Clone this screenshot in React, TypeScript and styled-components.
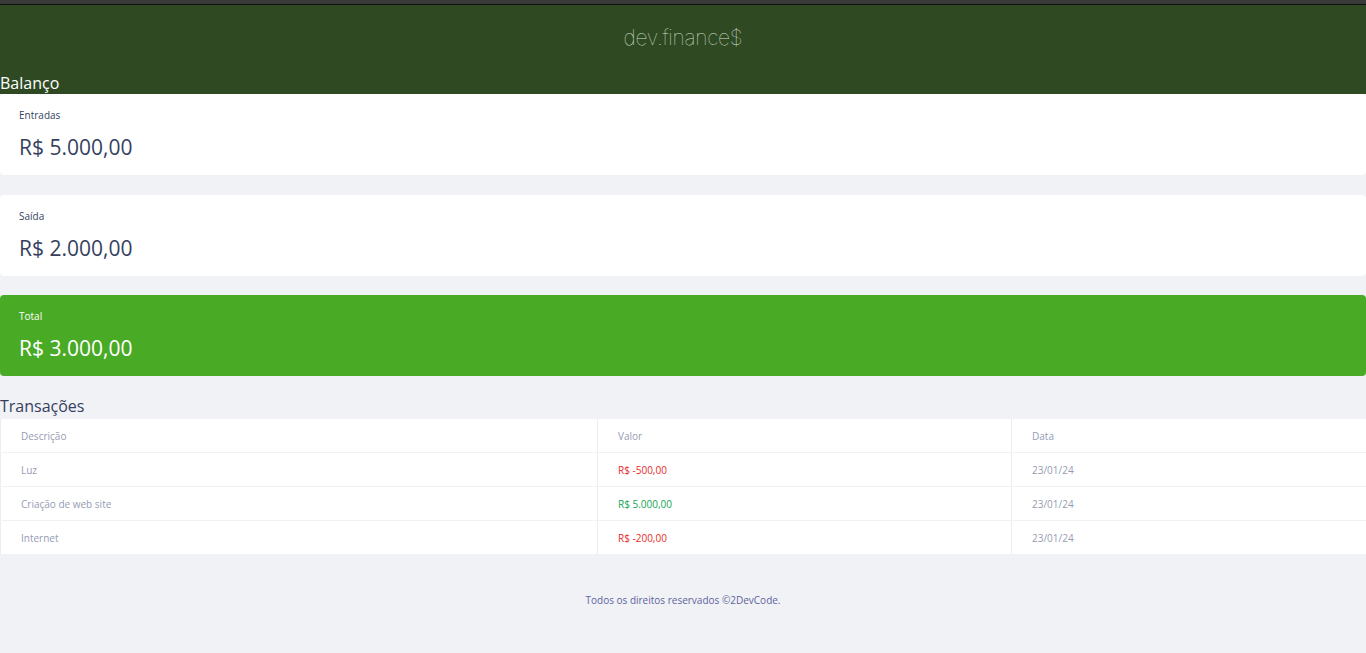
import React from "react";
import styled, { createGlobalStyle } from "styled-components";

const Global = createGlobalStyle`
  html, body { margin: 0; padding: 0; }
  body {
    background: #f0f2f5;
    font-family: "Open Sans", "Noto Sans", sans-serif;
    color: #363f5f;
  }
  * { box-sizing: border-box; }
`;

const TopBar = styled.div`
  height: 5px;
  background: #3a3a3a;
  border-bottom: 1px solid #111;
`;

const Header = styled.header`
  background: #2f4a23;
  height: 89px;
  padding-top: 19px;
  display: flex;
  flex-direction: column;
`;

const Logo = styled.h1`
  margin: 0;
  text-align: center;
  font-family: "Inter", "Open Sans", sans-serif;
  font-weight: 100;
  font-size: 21px;
  line-height: 28px;
  color: #d3dfcd;
  letter-spacing: -0.3px;
`;

const SectionTitle = styled.h2<{ $light?: boolean }>`
  margin: 0;
  font-weight: 400;
  font-size: 16px;
  line-height: 20px;
  color: ${(p) => (p.$light ? "#ffffff" : "#363f5f")};
`;

const HeaderTitle = styled(SectionTitle)`
  margin-top: 21px;
`;

const Main = styled.main`
  display: flex;
  flex-direction: column;
`;

const Cards = styled.section`
  display: flex;
  flex-direction: column;
  gap: 19.5px;
`;

const Card = styled.div<{ $total?: boolean }>`
  height: 81px;
  border-radius: 4px;
  padding: 14px 19px 0;
  background: ${(p) => (p.$total ? "#49aa26" : "#ffffff")};
  color: ${(p) => (p.$total ? "#ffffff" : "#363f5f")};
`;

const CardLabel = styled.h3`
  margin: 0;
  font-size: 10px;
  line-height: 14px;
  font-weight: 400;
`;

const CardValue = styled.p`
  margin: 11px 0 0;
  font-size: 21px;
  line-height: 28px;
  font-weight: 400;
`;

const TransTitle = styled(SectionTitle)`
  margin-top: 20px;
`;

const Table = styled.table`
  width: 100%;
  margin-top: 2px;
  border-collapse: separate;
  border-spacing: 0 1px;
  font-size: 10px;
  color: #969cb3;
`;

const Th = styled.th<{ $w: number }>`
  width: ${(p) => p.$w}px;
  height: 33px;
  background: #fff;
  text-align: left;
  font-weight: 400;
  padding: 0 20px;
  border-left: 1px solid #ebedf0;
`;

const Td = styled.td<{ $tone?: "in" | "out" }>`
  height: 33px;
  background: #fff;
  padding: 0 20px;
  border-left: 1px solid #ebedf0;
  color: ${(p) => (p.$tone === "in" ? "#12a454" : p.$tone === "out" ? "#e92929" : "#969cb3")};
`;

const Footer = styled.footer`
  padding: 38px 0 45px;
  text-align: center;
  font-size: 10px;
  line-height: 14px;
  color: #5f62a0;
`;

const rows = [
  { d: "Luz", v: "R$ -500,00", t: "out" as const, date: "23/01/24" },
  { d: "Criação de web site", v: "R$ 5.000,00", t: "in" as const, date: "23/01/24" },
  { d: "Internet", v: "R$ -200,00", t: "out" as const, date: "23/01/24" },
];

export default function App() {
  return (
    <>
      <Global />
      <TopBar />
      <Header>
        <Logo>dev.finance$</Logo>
        <HeaderTitle $light>Balanço</HeaderTitle>
      </Header>
      <Main>
        <Cards>
          <Card>
            <CardLabel>Entradas</CardLabel>
            <CardValue>R$ 5.000,00</CardValue>
          </Card>
          <Card>
            <CardLabel>Saída</CardLabel>
            <CardValue>R$ 2.000,00</CardValue>
          </Card>
          <Card $total>
            <CardLabel>Total</CardLabel>
            <CardValue>R$ 3.000,00</CardValue>
          </Card>
        </Cards>
        <TransTitle>Transações</TransTitle>
        <Table>
          <thead>
            <tr>
              <Th $w={597}>Descrição</Th>
              <Th $w={414}>Valor</Th>
              <Th $w={355}>Data</Th>
            </tr>
          </thead>
          <tbody>
            {rows.map((r) => (
              <tr key={r.d}>
                <Td>{r.d}</Td>
                <Td $tone={r.t}>{r.v}</Td>
                <Td>{r.date}</Td>
              </tr>
            ))}
          </tbody>
        </Table>
      </Main>
      <Footer>Todos os direitos reservados ©2DevCode.</Footer>
    </>
  );
}
